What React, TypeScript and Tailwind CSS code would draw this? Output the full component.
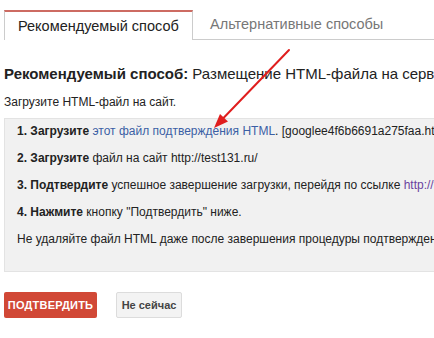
const font = { fontFamily: '"Liberation Sans", Arial, sans-serif' };

function Step({ n, verb, children }: { n: number; verb: string; children: React.ReactNode }) {
  return (
    <p className="leading-[16px] h-[16px]">
      <span className="font-bold">{n}. {verb}</span> {children}
    </p>
  );
}

export default function App() {
  return (
    <div
      className="relative w-[434px] h-[338px] overflow-hidden bg-white text-[#222] whitespace-nowrap"
      style={font}
    >
      {/* Tabs */}
      <div className="flex pt-[10px] pl-[4px]">
        <div className="h-[30px] w-[189px] border-x border-[#ccc] border-t-2 border-t-[#cd6b62] bg-white flex items-center pl-[13px] pt-[1px] text-[14.5px] text-[#222]">
          Рекомендуемый способ
        </div>
        <div className="flex-1 h-[30px] border-b border-[#ccc] flex items-center pl-[17px] pt-[1px] text-[14.5px] text-[#777]">
          Альтернативные способы
        </div>
      </div>

      {/* Content */}
      <div className="pl-[4px]">
        <h2 className="mt-[24px] text-[15px] leading-[20px]">
          <span className="font-bold">Рекомендуемый способ:</span> Размещение HTML-файла на сервере
        </h2>
        <p className="mt-[10px] text-[12px] leading-[16px]">Загрузите HTML-файл на сайт.</p>

        <div className="mt-[8px] w-[600px] bg-[#f1f1f1] border border-[#e3e3e3] pl-[12px] pt-[4px] pb-[24px] text-[12px] flex flex-col gap-[11px]">
          <Step n={1} verb="Загрузите">
            <span className="text-[#3b5fa5]">этот файл подтверждения HTML</span>. [googlee4f6b6691a275faa.html]
          </Step>
          <Step n={2} verb="Загрузите">
            файл на сайт http://test131.ru/
          </Step>
          <Step n={3} verb="Подтвердите">
            успешное завершение загрузки, перейдя по ссылке{' '}
            <span className="text-[#6a3fa0]">http://test131.ru/googlee4f6b6691a275faa.html</span>
          </Step>
          <Step n={4} verb="Нажмите">
            кнопку "Подтвердить" ниже.
          </Step>
          <p className="leading-[16px] h-[16px]">
            Не удаляйте файл HTML даже после завершения процедуры подтверждения.
          </p>
        </div>

        {/* Buttons */}
        <div className="mt-[20px] flex items-center gap-[19px]">
          <button className="h-[26px] w-[93px] rounded-[2px] bg-[#d14836] text-white text-[11px] font-bold tracking-[0.2px]">
            ПОДТВЕРДИТЬ
          </button>
          <button className="h-[26px] w-[66px] rounded-[2px] bg-[#f3f3f3] border border-[#dcdcdc] text-[#444] text-[11px] font-bold">
            Не сейчас
          </button>
        </div>
      </div>

      {/* Annotation arrow */}
      <svg className="absolute inset-0 pointer-events-none" width="434" height="338" viewBox="0 0 434 338">
        <line x1="289" y1="50" x2="223" y2="118.5" stroke="#e01e1e" strokeWidth="2" strokeLinecap="round" />
        <polygon points="214,128 228,121.5 220,114" fill="#e01e1e" />
      </svg>
    </div>
  );
}
